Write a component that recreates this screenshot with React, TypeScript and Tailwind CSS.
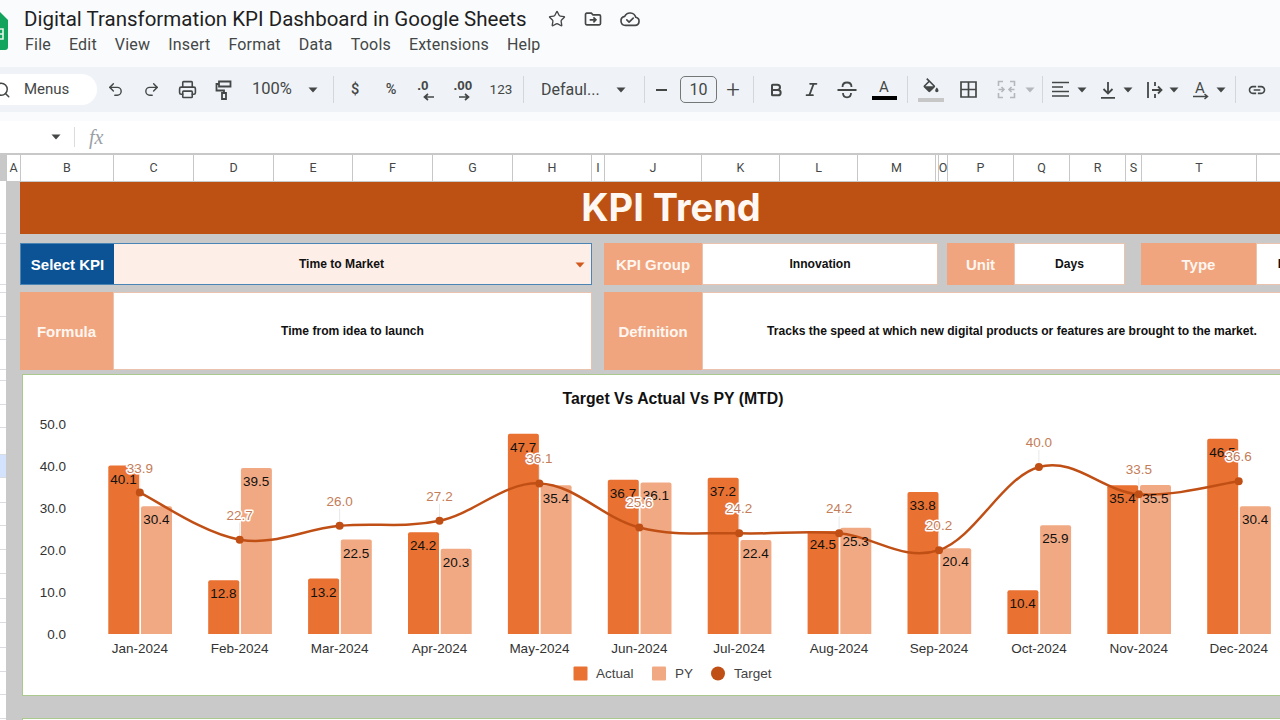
import React from "react";
import { Star, Undo2, Redo2, Printer, Search, Bold, Italic } from "lucide-react";

const Caret = ({ c = "#444746" }: { c?: string }) => (
  <svg width="10" height="6" viewBox="0 0 10 6" className="block flex-none"><path d="M0.5 0.5h9L5 5.5z" fill={c} /></svg>
);
const Sep = () => <div className="h-[27px] w-px flex-none bg-[#d3d6da]" />;
const ICON = "#444746";

const Logo = () => (
  <svg width="8" height="38" viewBox="0 0 8 38" className="block flex-none">
    <path d="M-12 0H0L8 8V35a3 3 0 0 1-3 3H-12Z" fill="#12a35d" />
    <path d="M-6 17H3V27H-6ZM-6 22H3" fill="none" stroke="#e6f5ec" strokeWidth="1.6" />
  </svg>
);
const FolderMove = () => (
  <svg width="20" height="20" viewBox="0 0 24 24" fill="none" stroke={ICON} strokeWidth="2">
    <path d="M3 6.5A1.5 1.5 0 0 1 4.5 5H10l2 2h7.5A1.5 1.5 0 0 1 21 8.5v9a1.5 1.5 0 0 1-1.5 1.5h-15A1.5 1.5 0 0 1 3 17.500Z" />
    <path d="M8 13h7M12.500 10l3 3-3 3" />
  </svg>
);
const CloudOk = () => (
  <svg width="22" height="22" viewBox="0 0 24 24" fill="none" stroke={ICON} strokeWidth="1.8" strokeLinejoin="round" strokeLinecap="round">
    <path d="M17.500 19H7a5 5 0 0 1-.8-9.900A6.500 6.500 0 0 1 18.300 10.100 4.500 4.500 0 0 1 17.500 19Z" />
    <path d="m8.500 13 2.500 2.500 4.500-4.500" />
  </svg>
);
const Roller = () => (
  <svg width="17" height="20" viewBox="0 0 17 20" fill="none" stroke={ICON} strokeWidth="1.800">
    <path d="M4 1.500h11.500v5H4zM4 4H1.500v6.500h7.500V13" />
    <path d="M7 13h4v6H7z" />
  </svg>
);
const Decimal = ({ t, right }: { t: string; right?: boolean }) => (
  <svg width="28" height="24" viewBox="0 0 28 24" className="font-['Liberation_Sans',sans-serif]">
    <text x={right ? 14 : 10} y="12" textAnchor="middle" fontSize="13.500" fontWeight="700" fill={ICON}>{t}</text>
    {right ? (
      <path d="M10 19h9M16 16l3.500 3-3.500 3" fill="none" stroke={ICON} strokeWidth="1.700" />
    ) : (
      <path d="M21 19h-9M15 16l-3.500 3 3.500 3" fill="none" stroke={ICON} strokeWidth="1.700" />
    )}
  </svg>
);
const Strike = () => (
  <svg width="22" height="22" viewBox="0 0 22 22" fill="none" stroke={ICON} strokeWidth="1.800">
    <path d="M1.500 11h19M6.500 8c0-3 2-4.500 4.500-4.500S15.500 5 15.500 8M7 14c0 2.800 1.800 4.300 4 4.300s4-1.500 4-4.300" />
  </svg>
);
const Fill = () => (
  <svg width="20" height="20" viewBox="0 0 24 24" fill={ICON}>
    <path d="M16.560 8.940L7.620 0 6.210 1.410l2.380 2.380-5.150 5.150c-.59.59-.59 1.540 0 2.120l5.500 5.500c.29.29.68.44 1.060.44s.77-.15 1.060-.44l5.500-5.500c.59-.58.59-1.530 0-2.120zM5.210 10L10 5.210 14.790 10H5.210zM19 11.500s-2 2.170-2 3.500c0 1.100.9 2 2 2s2-.9 2-2c0-1.330-2-3.500-2-3.500z" />
  </svg>
);
const Borders = () => (
  <svg width="17" height="17" viewBox="0 0 17 17" fill="none" stroke={ICON} strokeWidth="1.700"><path d="M1 1h15v15H1ZM8.500 1v15M1 8.500h15" /></svg>
);
const Merge = () => (
  <svg width="19" height="19" viewBox="0 0 19 19" fill="none" stroke="#b4b8bc" strokeWidth="1.600">
    <path d="M6 1.500H1.500V6M1.500 13v4.500H6M13 1.500h4.500V6M17.500 13v4.500H13M1.500 9.500H7M4.500 7 7 9.500 4.500 12M17.500 9.500H12M14.500 7 12 9.500l2.500 2.500" />
  </svg>
);
const AlignIcon = () => (
  <svg width="17" height="17" viewBox="0 0 17 17" stroke={ICON} strokeWidth="1.700"><path d="M0 1.500h17M0 6h11M0 10.500h17M0 15h17" /></svg>
);
const VAlign = () => (
  <svg width="16" height="18" viewBox="0 0 16 18" fill="none" stroke={ICON} strokeWidth="1.800"><path d="M8 1v11M3.500 8 8 12.500 12.500 8M1 16.800h14" /></svg>
);
const Wrap = () => (
  <svg width="17" height="18" viewBox="0 0 17 18" fill="none" stroke={ICON} strokeWidth="1.800"><path d="M2 1v16M6 9h9M12 5.500 15.500 9 12 12.500M9 1v4M9 13v4" /></svg>
);
const Rotate = () => (
  <svg width="18" height="20" viewBox="0 0 18 20" fill="none" className="font-['Roboto',sans-serif]">
    <text x="8" y="13" textAnchor="middle" fontSize="15" fill={ICON}>A</text>
    <path d="M1 16.500h14M12.500 14l3 2.500-3 2.500" stroke={ICON} strokeWidth="1.500" />
  </svg>
);
const LinkIcon = () => (
  <svg width="20" height="20" viewBox="0 0 24 24" fill={ICON}>
    <path d="M3.900 12c0-1.710 1.390-3.100 3.100-3.100h4V7H7c-2.760 0-5 2.240-5 5s2.240 5 5 5h4v-1.900H7c-1.710 0-3.100-1.390-3.100-3.100zM8 13h8v-2H8v2zm9-6h-4v1.900h4c1.710 0 3.100 1.390 3.100 3.100s-1.390 3.100-3.100 3.100h-4V17h4c2.760 0 5-2.240 5-5s-2.240-5-5-5z" />
  </svg>
);

const columns: [string, number][] = [
  ["", 7], ["A", 14], ["B", 93], ["C", 80], ["D", 80], ["E", 79], ["F", 80], ["G", 80], ["H", 79], ["I", 13], ["J", 97],
  ["K", 78], ["L", 78], ["M", 78], ["", 3], ["O", 9], ["P", 66], ["Q", 56], ["R", 56], ["S", 16], ["T", 115], ["", 40],
];
const rowHeights = [53, 10, 40.500, 8, 24, 23.500, 30, 11, 23.500, 23.500, 27, 23, 25, 23, 24, 24, 25, 24, 25, 24, 23, 24];

const months = ["Jan", "Feb", "Mar", "Apr", "May", "Jun", "Jul", "Aug", "Sep", "Oct", "Nov", "Dec"];
const actual = [40.1, 12.8, 13.2, 24.2, 47.7, 36.7, 37.2, 24.5, 33.8, 10.4, 35.4, 46.5];
const py = [30.4, 39.5, 22.5, 20.3, 35.4, 36.1, 22.4, 25.3, 20.4, 25.9, 35.5, 30.4];
const target = [33.9, 22.7, 26.0, 27.2, 36.1, 25.6, 24.2, 24.2, 20.2, 40.0, 33.5, 36.6];
const BASE = 634;
const SCALE = 4.2;
const STEP = 99.9;
const CX0 = 139.8;

const pts = target.map((v, i) => [CX0 + STEP * i, BASE - v * SCALE + 1] as [number, number]);
const curve = pts
  .map((p, i) => {
    if (i === 0) return `M${p[0]} ${p[1]}`;
    const p0 = pts[Math.max(i - 2, 0)];
    const p1 = pts[i - 1];
    const p3 = pts[Math.min(i + 1, pts.length - 1)];
    const c1 = [p1[0] + (p[0] - p0[0]) / 5.5, p1[1] + (p[1] - p0[1]) / 5.5];
    const c2 = [p[0] - (p3[0] - p1[0]) / 5.5, p[1] - (p3[1] - p1[1]) / 5.5];
    return `C${c1[0]} ${c1[1]} ${c2[0]} ${c2[1]} ${p[0]} ${p[1]}`;
  })
  .join(" ");
const bar = (x: number, v: number) => {
  const t = BASE - v * SCALE;
  return `M${x} ${BASE}V${t + 2}q0-2 2-2H${x + 29}q2 0 2 2V${BASE}Z`;
};

const Chart = () => (
  <svg width="1300" height="320" viewBox="23 375 1300 320" className="block font-['Liberation_Sans',sans-serif]">
    <text x="673" y="403.500" textAnchor="middle" fontSize="15.800" fontWeight="700" fill="#111">Target Vs Actual Vs PY (MTD)</text>
    {[50, 40, 30, 20, 10, 0].map((v) => (
      <text key={v} x="66" y={BASE - v * SCALE + 5} textAnchor="end" fontSize="13.500" fill="#333">{v.toFixed(1)}</text>
    ))}
    {months.map((m, i) => (
      <g key={m}>
        <path d={bar(108.300 + STEP * i, actual[i])} fill="#e97132" />
        <path d={bar(141 + STEP * i, py[i])} fill="#f1a983" />
        <text x={CX0 + STEP * i} y="653" textAnchor="middle" fontSize="13.500" fill="#333">{m}-2024</text>
      </g>
    ))}
    {pts.map((p, i) => (
      <path key={i} d={`M${p[0]} ${p[1] - 17}V${p[1]}`} stroke="#e8e8e8" strokeWidth="1" />
    ))}
    <path d={curve} fill="none" stroke="#c04f15" strokeWidth="2.500" />
    {pts.map((p, i) => (
      <circle key={i} cx={p[0]} cy={p[1]} r="4" fill="#c04f15" />
    ))}
    {actual.map((v, i) => (
      <text key={i} x={123.500 + STEP * i} y={BASE - v * SCALE + 18} textAnchor="middle" fontSize="13.500" fill="#111">{v.toFixed(1)}</text>
    ))}
    {py.map((v, i) => (
      <text key={i} x={156.300 + STEP * i} y={BASE - v * SCALE + 18} textAnchor="middle" fontSize="13.500" fill="#111">{v.toFixed(1)}</text>
    ))}
    {target.map((v, i) => (
      <text key={i} x={pts[i][0]} y={pts[i][1] - 20} textAnchor="middle" fontSize="13.500" fill="#c47d58" stroke="#fff" strokeWidth="3" strokeLinejoin="round" paintOrder="stroke">{v.toFixed(1)}</text>
    ))}
    <rect x="573.500" y="666.500" width="14" height="14" rx="1" fill="#e97132" />
    <text x="596" y="678" fontSize="13.500" fill="#444">Actual</text>
    <rect x="652" y="666.500" width="14" height="14" rx="1" fill="#f1a983" />
    <text x="675" y="678" fontSize="13.500" fill="#444">PY</text>
    <circle cx="718" cy="673.500" r="7" fill="#c04f15" />
    <text x="734" y="678" fontSize="13.500" fill="#444">Target</text>
  </svg>
);

const Label = ({ children, className }: { children: React.ReactNode; className: string }) => (
  <div className={`flex flex-none items-center justify-center bg-[#f0a57f] pt-[2px] text-[15px] font-bold text-[#fff6f0] ${className}`}>{children}</div>
);
const Value = ({ children, className }: { children: React.ReactNode; className: string }) => (
  <div className={`flex flex-none items-center justify-center border border-[#eac3ae] bg-white text-[12.100px] font-bold text-[#111] ${className}`}>{children}</div>
);

export default function App() {
  return (
    <div className="flex h-[720px] w-[1280px] flex-col overflow-hidden bg-white font-['Roboto',sans-serif]">
      {/* title + menus */}
      <div className="flex h-[67px] flex-none bg-[#f9fbfd]">
        <div className="mt-[12px] flex-none"><Logo /></div>
        <div className="ml-[16px] flex flex-col">
          <div className="mt-[5px] flex h-[28px] items-center">
            <span className="w-[503px] whitespace-nowrap text-[20.500px] leading-[28px] text-[#1f1f1f]">Digital Transformation KPI Dashboard in Google Sheets</span>
            <div className="ml-[19px] flex w-[22px] justify-center"><Star size={18} color={ICON} strokeWidth={1.800} /></div>
            <div className="ml-[14px] flex w-[22px] justify-center"><FolderMove /></div>
            <div className="ml-[15px] flex w-[22px] justify-center"><CloudOk /></div>
          </div>
          <div className="mt-[1px] flex gap-[18px] pl-px text-[16px] leading-[22px] tracking-[0.2px] text-[#444746]">
            {["File", "Edit", "View", "Insert", "Format", "Data", "Tools", "Extensions", "Help"].map((m) => (
              <span key={m}>{m}</span>
            ))}
          </div>
        </div>
      </div>

      {/* toolbar */}
      <div className="flex h-[45px] flex-none items-center bg-[#eff3f8] text-[#444746]">
        <div className="flex h-[31px] w-[97px] flex-none items-center overflow-hidden rounded-r-full bg-white">
          <Search size={18} color={ICON} strokeWidth={2} className="-ml-[7px] flex-none" />
          <span className="ml-[13px] text-[15px]">Menus</span>
        </div>
        <div className="flex w-[36px] flex-none justify-center"><Undo2 size={17} color={ICON} strokeWidth={2} /></div>
        <div className="flex w-[36px] flex-none justify-center"><Redo2 size={17} color={ICON} strokeWidth={2} /></div>
        <div className="flex w-[36px] flex-none justify-center"><Printer size={19} color={ICON} strokeWidth={2} /></div>
        <div className="flex w-[36px] flex-none justify-center"><Roller /></div>
        <div className="flex w-[84px] flex-none items-center pl-[11px]">
          <span className="w-[56px] text-[16.500px]">100%</span>
          <Caret />
        </div>
        <div className="ml-[8px]"><Sep /></div>
        <div className="ml-[3px] flex w-[36px] flex-none justify-center text-[14.500px] font-medium">$</div>
        <div className="flex w-[36px] flex-none justify-center text-[14.500px] font-medium">%</div>
        <div className="flex w-[36px] flex-none justify-center"><Decimal t=".0" /></div>
        <div className="flex w-[36px] flex-none justify-center"><Decimal t=".00" right /></div>
        <div className="flex w-[40px] flex-none justify-center text-[13.500px]">123</div>
        <div className="ml-[2px]"><Sep /></div>
        <div className="flex w-[120px] flex-none items-center pl-[17px]">
          <span className="w-[75px] text-[16px]">Defaul...</span>
          <Caret />
        </div>
        <Sep />
        <div className="flex w-[33px] flex-none justify-center"><div className="h-[2px] w-[11px] bg-[#444746]" /></div>
        <div className="ml-[2px] flex h-[27px] w-[37px] flex-none items-center justify-center rounded-[5px] border border-[#747775] text-[16px]">10</div>
        <div className="flex w-[32px] flex-none justify-center text-[24px] font-light leading-[24px]">+</div>
        <div className="ml-[4px]"><Sep /></div>
        <div className="flex w-[43px] flex-none justify-center"><Bold size={16} color={ICON} strokeWidth={3} /></div>
        <div className="flex w-[29px] flex-none justify-center"><Italic size={17} color={ICON} strokeWidth={2.500} /></div>
        <div className="flex w-[42px] flex-none justify-center"><Strike /></div>
        <div className="flex w-[32px] flex-none flex-col items-center">
          <span className="text-[15px] leading-[15px]">A</span>
          <div className="mt-[1px] h-[4px] w-[25px] bg-black" />
        </div>
        <div className="ml-[7px]"><Sep /></div>
        <div className="flex w-[45px] flex-none flex-col items-center">
          <Fill />
          <div className="h-[4px] w-[26px] bg-[#c7c7c7]" />
        </div>
        <div className="flex w-[30px] flex-none justify-center"><Borders /></div>
        <div className="ml-[3px] flex w-[40px] flex-none justify-center"><Merge /></div>
        <div className="flex w-[8px] flex-none justify-center"><Caret c="#b4b8bc" /></div>
        <div className="ml-[8px]"><Sep /></div>
        <div className="flex w-[35px] flex-none justify-center"><AlignIcon /></div>
        <div className="flex w-[8px] flex-none justify-center"><Caret /></div>
        <div className="ml-[6px] flex w-[32px] flex-none justify-center"><VAlign /></div>
        <div className="flex w-[8px] flex-none justify-center"><Caret /></div>
        <div className="ml-[6px] flex w-[32px] flex-none justify-center"><Wrap /></div>
        <div className="flex w-[8px] flex-none justify-center"><Caret /></div>
        <div className="ml-[7px] flex w-[32px] flex-none justify-center"><Rotate /></div>
        <div className="flex w-[8px] flex-none justify-center"><Caret /></div>
        <div className="ml-[10px]"><Sep /></div>
        <div className="ml-[5px] flex w-[32px] flex-none justify-center"><LinkIcon /></div>
      </div>

      <div className="h-[9px] flex-none bg-[#f9fbfd]" />

      {/* formula bar */}
      <div className="flex h-[32px] flex-none items-center bg-white">
        <div className="ml-[51px]"><Caret /></div>
        <div className="ml-[13px] h-[20px] w-px bg-[#dadce0]" />
        <span className="ml-[14px] font-['Liberation_Serif',serif] text-[20px] italic text-[#9aa0a6]">fx</span>
      </div>

      {/* column headers */}
      <div className="flex h-[28px] flex-none border-t-2 border-[#c8c8c8] bg-white text-[12.500px] text-[#444746]">
        {columns.map(([c, w], i) => (
          <div
            key={i}
            style={{ width: w }}
            className={`flex flex-none items-center justify-center border-r border-[#c7c7c7] ${i === 0 ? "bg-[#c8c8c8]" : ""}`}
          >
            {c}
          </div>
        ))}
      </div>

      {/* sheet body */}
      <div className="flex min-h-0 flex-1">
        <div className="flex w-[6px] flex-none flex-col bg-white">
          {rowHeights.map((h, i) => (
            <div key={i} style={{ height: h }} className={`flex-none border-b border-[#dadce0] ${i === 11 ? "bg-[#d3e3fd]" : ""}`} />
          ))}
        </div>
        <div className="flex-1 overflow-hidden bg-[#c9c9c9] pl-[14px] font-['Liberation_Sans',sans-serif]">
          <div className="flex w-[1302px] flex-col">
            <div className="mt-px flex h-[52px] items-center justify-center bg-[#bc5113] pb-[1px] font-['Inter',sans-serif] text-[38px] font-bold text-[#fff8f2]">KPI Trend</div>

            <div className="mt-[9px] flex h-[42px]">
              <div className="flex w-[572px] flex-none border border-[#4a85b5]">
                <div className="flex w-[93px] flex-none items-center justify-center bg-[#0b5394] pt-[2px] text-[15px] font-bold text-white">Select KPI</div>
                <div className="flex flex-1 items-center justify-center bg-[#fdefe8] pr-[22px] text-[12.100px] font-bold text-[#111]">
                  <span>Time to Market</span>
                </div>
              </div>
              <div className="relative">
                <div className="absolute left-[-17px] top-[19px]"><Caret c="#d2581c" /></div>
              </div>
              <Label className="ml-[12px] w-[98px]">KPI Group</Label>
              <Value className="w-[236px]">Innovation</Value>
              <Label className="ml-[9px] w-[67px]">Unit</Label>
              <Value className="w-[111px]">Days</Value>
              <Label className="ml-[16px] w-[115px]">Type</Label>
              <Value className="w-[66px]">LTB</Value>
            </div>

            <div className="mt-[7px] flex h-[78px]">
              <Label className="w-[93px]">Formula</Label>
              <Value className="w-[479px]">Time from idea to launch</Value>
              <Label className="ml-[12px] w-[98px]">Definition</Label>
              <Value className="w-[620px]">Tracks the speed at which new digital products or features are brought to the market.</Value>
            </div>

            <div className="ml-[2px] mt-[4px] h-[322px] w-[1302px] border border-[#a9c98f] bg-white">
              <Chart />
            </div>
            <div className="ml-[2px] mt-[22px] h-[40px] w-[1302px] border border-[#a9c98f] bg-white" />
          </div>
        </div>
      </div>
    </div>
  );
}
